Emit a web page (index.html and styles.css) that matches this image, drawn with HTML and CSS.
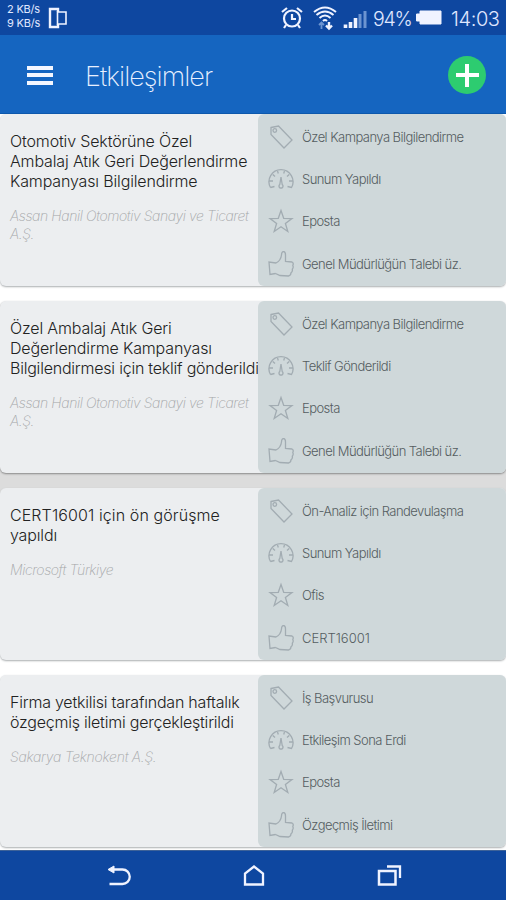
FILE: index.html
```html
<!DOCTYPE html>
<html lang="tr">
<head>
<meta charset="utf-8">
<title>Etkileşimler</title>
<link rel="stylesheet" href="styles.css">
</head>
<body>
<svg class="defs" aria-hidden="true">
  <symbol id="tag" viewBox="0 0 26 26"><path d="M3 3.500 10.500 2 24 16 16 24 3 10.500Z"/><circle cx="6.800" cy="6.500" r="1.800"/></symbol>
  <symbol id="gauge" viewBox="0 0 26 26"><path d="M2.500 21.500A12 12 0 1 1 23.500 21.500L19.500 20.500M2.500 21.500 6.500 20.500M1.500 15H5M24.500 15H21M4.800 8.500 7 10.500M21.200 8.500 19 10.500M9.500 5 10.300 7.500M16.500 5 15.700 7.500M13 11 11.800 18.500A2 2 0 1 0 14.200 18.500Z"/></symbol>
  <symbol id="star" viewBox="0 0 26 26"><path d="M13 2.500 15.700 10.300 24 10.500 17.400 15.500 19.800 23.500 13 18.800 6.200 23.500 8.600 15.500 2 10.500 10.300 10.300Z"/></symbol>
  <symbol id="thumb" viewBox="0 0 26 26"><path d="M8 12C11 10.500 13 8 13.500 4 13.500-.5 17.500-.5 17.500 4V10.500L24 11Q26 12 24.800 14.500 25.800 16.500 24.300 18.200 24.800 20.500 23 21.800 23 24.500 20.500 25L12 24.500 7.500 22.500M8 12 1 11 2 23.500 7.500 22.500"/></symbol>
</svg>
<header class="status">
  <div class="speed">2 KB/s<br>9 KB/s</div>
  <svg class="phones" width="22" height="22" viewBox="0 0 22 22"><path d="M11 5V2H3V20H11V17" stroke-width="2.400"/><path d="M10.500 5H19V17H10.500Z" stroke-width="1.600"/></svg>
  <svg class="alarm" width="24" height="24" viewBox="0 0 24 24"><circle cx="12" cy="12.500" r="8" stroke-width="2.200"/><path d="M12 8V13H16M2 6 7 2M22 6 17 2M6 19 4 22M18 19 20 22" stroke-width="2.200"/></svg>
  <svg class="wifi" width="26" height="26" viewBox="0 0 26 26"><path d="M2 7Q13-2 24 7M4.500 10Q13 3 21.500 10M7.500 13Q13 8 18.500 13M11 16Q13 14 15 16" stroke-width="2"/><path class="dim" d="M9.500 24V18M7 20 9.500 17.500 12 20" stroke-width="1.800"/><path d="M17 17V22M14 20.500 17 23.500 20 20.500" stroke-width="2.400"/></svg>
  <svg class="signal" width="24" height="18" viewBox="0 0 24 18"><path d="M2.500 18V14.500M7.500 18V12M12.500 18V8" stroke-width="3.600"/><path class="dim" d="M17 18V4M22 18V1" stroke-width="3"/></svg>
  <span class="percent">94%</span>
  <svg class="battery" width="28" height="17" viewBox="0 0 28 17"><path class="solid" d="M5 2H26V15H5V12H1.500V5H5Z"/></svg>
  <span class="clock">14:03</span>
</header>
<div class="appbar">
  <div class="menu"><i></i><i></i><i></i></div>
  <h1>Etkileşimler</h1>
  <div class="add"></div>
</div>
<main class="list">
  <article class="card">
    <div class="info"><h2>Otomotiv Sektörüne Özel<br>Ambalaj Atık Geri Değerlendirme<br>Kampanyası Bilgilendirme</h2><p>Assan Hanil Otomotiv Sanayi ve Ticaret<br>A.Ş.</p></div>
    <ul class="meta"><li><svg><use href="#tag"/></svg>Özel Kampanya Bilgilendirme</li><li><svg><use href="#gauge"/></svg>Sunum Yapıldı</li><li><svg><use href="#star"/></svg>Eposta</li><li><svg><use href="#thumb"/></svg>Genel Müdürlüğün Talebi üz.</li></ul>
  </article>
  <article class="card pressed">
    <div class="info"><h2>Özel Ambalaj Atık Geri<br>Değerlendirme Kampanyası<br><span class="snug">Bilgilendirmesi için teklif gönderildi</span></h2><p>Assan Hanil Otomotiv Sanayi ve Ticaret<br>A.Ş.</p></div>
    <ul class="meta"><li><svg><use href="#tag"/></svg>Özel Kampanya Bilgilendirme</li><li><svg><use href="#gauge"/></svg>Teklif Gönderildi</li><li><svg><use href="#star"/></svg>Eposta</li><li><svg><use href="#thumb"/></svg>Genel Müdürlüğün Talebi üz.</li></ul>
  </article>
  <article class="card">
    <div class="info"><h2><span class="wide">CERT16001 için ön görüşme</span><br>yapıldı</h2><p>Microsoft Türkiye</p></div>
    <ul class="meta"><li><svg><use href="#tag"/></svg>Ön-Analiz için Randevulaşma</li><li><svg><use href="#gauge"/></svg>Sunum Yapıldı</li><li><svg><use href="#star"/></svg>Ofis</li><li><svg><use href="#thumb"/></svg><span class="wide">CERT16001</span></li></ul>
  </article>
  <article class="card">
    <div class="info"><h2 class="snug">Firma yetkilisi tarafından haftalık<br>özgeçmiş iletimi gerçekleştirildi</h2><p class="wide">Sakarya Teknokent A.Ş.</p></div>
    <ul class="meta"><li><svg><use href="#tag"/></svg>İş Başvurusu</li><li><svg><use href="#gauge"/></svg>Etkileşim Sona Erdi</li><li><svg><use href="#star"/></svg>Eposta</li><li><svg><use href="#thumb"/></svg>Özgeçmiş İletimi</li></ul>
  </article>
</main>
<nav class="nav">
  <svg width="28" height="28" viewBox="0 0 28 28"><path d="M6 7.500H17.500A7 7 0 0 1 17.500 22H4.500" stroke-width="2.300"/><path class="solid" d="M3 7.500 9 4V11Z"/></svg>
  <svg width="28" height="28" viewBox="0 0 28 28"><path d="M5 22.500V11.500L14 4.500 23 11.500V22.500Z" stroke-width="2.300"/></svg>
  <svg width="28" height="28" viewBox="0 0 28 28"><path d="M4 9H20.500V22.500H4Z" stroke-width="2.500"/><path d="M12 4.500H25V16" stroke-width="2.300"/></svg>
</nav>
</body>
</html>
```
FILE: styles.css
```css
* { box-sizing: border-box; }
body { margin: 0; width: 506px; height: 900px; overflow: hidden; display: flex; flex-direction: column; background: #fff; font-family: Inter, "Liberation Sans", sans-serif; font-weight: 300; }
h1, h2, p, ul { margin: 0; padding: 0; font-weight: 300; white-space: nowrap; }
svg { fill: none; flex: none; overflow: visible; }
.defs { position: absolute; width: 0; height: 0; }
.status { height: 35px; flex: none; background: #0e47a0; color: #e0e8ff; display: flex; align-items: center; padding-left: 7px; }
.status svg, .nav svg { stroke: #f0f3ff; }
.status .solid, .nav .solid { fill: #f0f3ff; }
.status .dim { stroke: #6c94d0; }
.speed { width: 40px; margin-top: -4px; font-size: 11px; line-height: 14px; letter-spacing: -.2px; font-weight: 400; white-space: nowrap; }
.alarm { margin-left: 211px; }
.wifi { margin-left: 8px; }
.signal { margin-left: 5px; margin-top: 2px; }
.percent { width: 41px; margin: 3px 0 0 6px; font-size: 19.500px; letter-spacing: -1.300px; }
.battery { width: 28px; margin-left: 1px; }
.clock { margin: 3px 0 0 8px; font-size: 20px; letter-spacing: -.4px; }
.appbar { height: 79px; flex: none; background: #1565c0; border-bottom: 1px solid #0d58ac; display: flex; align-items: center; padding: 2px 20px 0 27px; color: #e8f0ff; }
.menu { width: 26px; height: 19px; display: flex; flex-direction: column; justify-content: space-between; }
.menu i { height: 4px; background: #f4f7ff; }
h1 { margin: 3px 0 0 32px; font-size: 27px; font-weight: 250; letter-spacing: -.950px; }
.add { width: 38px; height: 38px; margin-left: auto; border-radius: 50%; background: linear-gradient(#fff, #fff) center / 23px 4px no-repeat, linear-gradient(#fff, #fff) center / 4px 23px no-repeat, #2dcc70; }
.list { height: 736px; flex: none; overflow: hidden; background: linear-gradient(#dcdcdc, #dcdcdc) 0 354px / 100% 25px no-repeat, #fff; }
.card { display: flex; height: 172px; margin-bottom: 15px; background: #eceef0; border-radius: 6px; box-shadow: 0 1px 2px #aaaeb0; }
.pressed { box-shadow: 0 1px 2px #888; }
.info { width: 258px; flex: none; padding: 17px 0 0 10px; }
h2 { font-size: 16px; line-height: 20px; letter-spacing: -.150px; color: #222; }
h2 .snug, h2.snug { letter-spacing: -.220px; }
h2 .wide { letter-spacing: .1px; }
.info p { margin-top: 16px; font-size: 14px; line-height: 18px; font-style: italic; font-weight: 200; letter-spacing: -.4px; color: #a4a6a8; }
.info p.wide { letter-spacing: -.250px; }
.meta { flex: 1; list-style: none; background: #cfd8da; border-radius: 6px; padding: 2px 0 0 10px; }
.meta li { height: 42.200px; display: flex; align-items: center; gap: 8px; font-size: 13px; letter-spacing: -.550px; color: #555d61; }
.meta li .wide { letter-spacing: 0; }
.meta svg { width: 26px; height: 26px; stroke: #a2acb2; stroke-width: 1.300; }
.nav { height: 50px; flex: none; background: #0e47a0; border-top: 1px solid #3d6298; display: flex; justify-content: center; align-items: center; gap: 107px; padding-left: 2px; }
```
